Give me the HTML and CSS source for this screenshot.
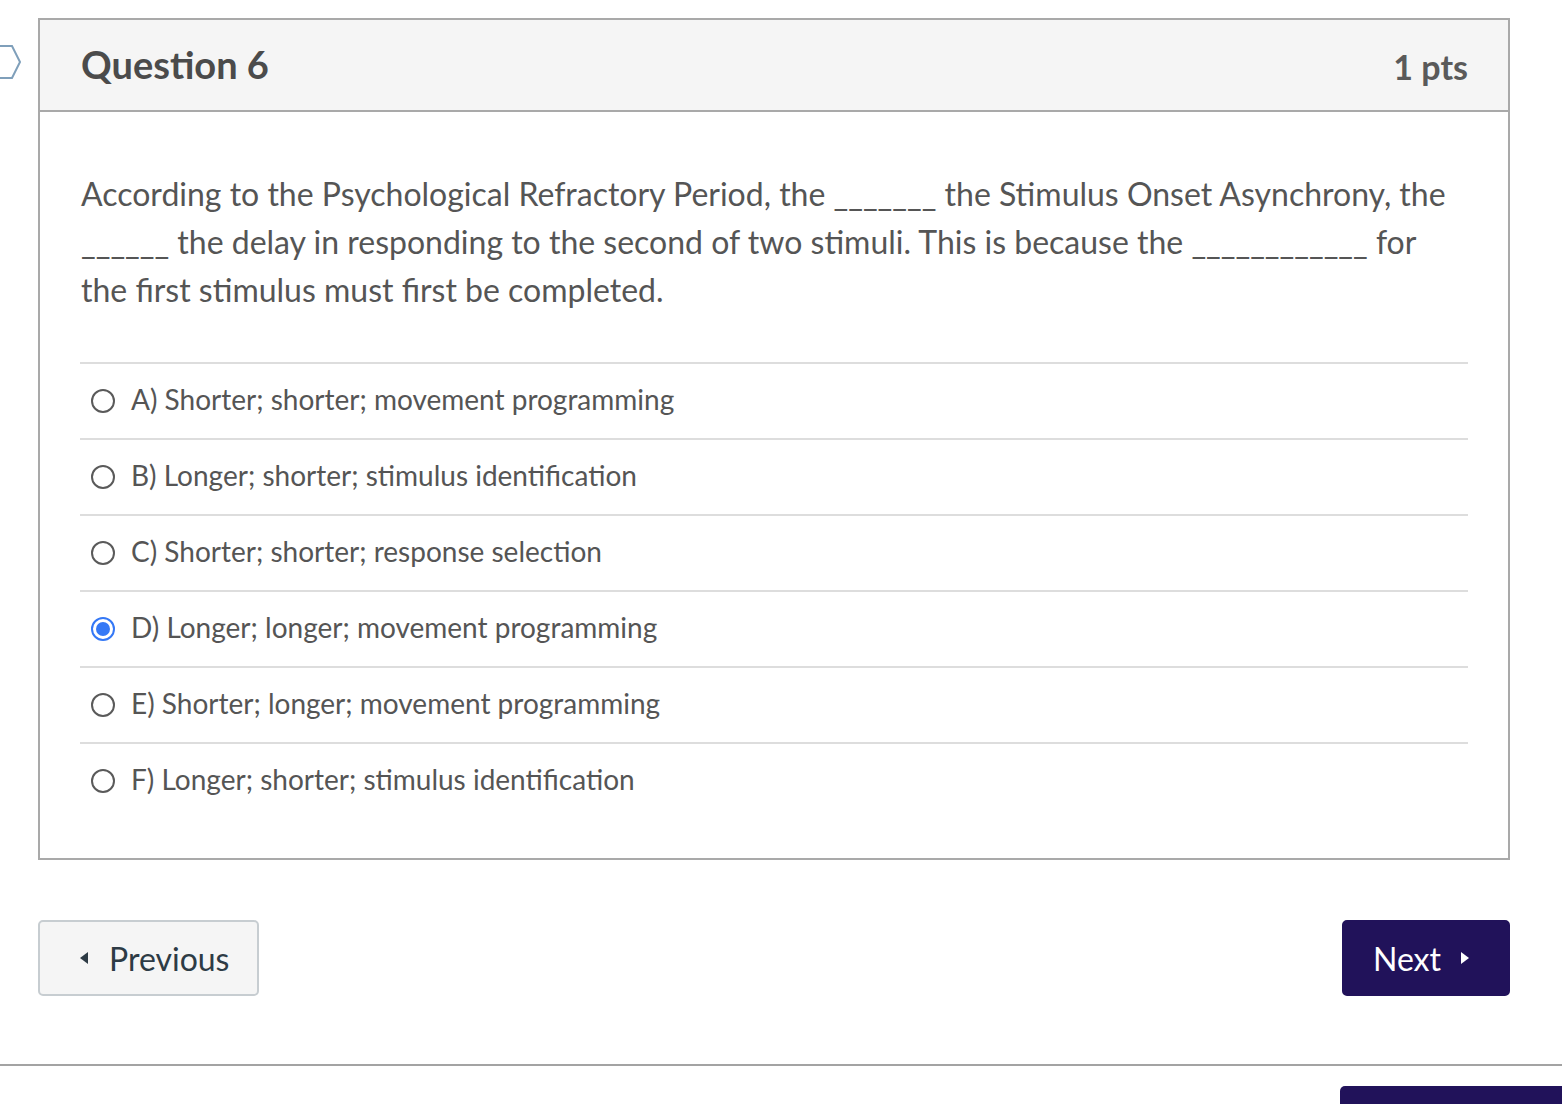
FILE: index.html
```html
<!DOCTYPE html>
<html>
<head>
<meta charset="utf-8">
<link rel="stylesheet" href="styles.css">
</head>
<body>
<svg class="flag" width="22" height="36" viewBox="0 0 22 36"><polygon points="-10,2 12,2 20,18 12,34 -10,34" fill="none" stroke="#7f9fba" stroke-width="2"/></svg>
<div class="wrap">
  <div class="card">
    <div class="card-head">
      <span class="title">Question 6</span>
      <span class="pts">1 pts</span>
    </div>
    <div class="card-body">
      <p class="qtext">According to the Psychological Refractory Period, the _______ the Stimulus Onset Asynchrony, the ______ the delay in responding to the second of two stimuli. This is because the ____________ for the first stimulus must first be completed.</p>
      <div class="answers">
        <div class="answer"><span class="radio"></span><span>A) Shorter; shorter; movement programming</span></div>
        <div class="answer"><span class="radio"></span><span>B) Longer; shorter; stimulus identification</span></div>
        <div class="answer"><span class="radio"></span><span>C) Shorter; shorter; response selection</span></div>
        <div class="answer"><span class="radio checked"></span><span>D) Longer; longer; movement programming</span></div>
        <div class="answer"><span class="radio"></span><span>E) Shorter; longer; movement programming</span></div>
        <div class="answer"><span class="radio"></span><span>F) Longer; shorter; stimulus identification</span></div>
      </div>
    </div>
  </div>
  <div class="nav">
    <button class="btn prev"><span class="tri-left"></span>Previous</button>
    <button class="btn next">Next<span class="tri-right"></span></button>
  </div>
</div>
<div class="rule"></div>
<div class="bottom-row"><div class="submit"></div></div>
</body>
</html>
```
FILE: styles.css
```css
html, body {
  margin: 0;
  padding: 0;
  background: #ffffff;
  overflow: hidden;
}
body {
  font-family: Lato, "Noto Sans", sans-serif;
  color: #555555;
  position: relative;
  height: 1104px;
}
.flag {
  position: absolute;
  left: 0;
  top: 44px;
}
.wrap {
  margin: 18px 52px 0 38px;
}
.card {
  border: 2px solid #a9a9a9;
}
.card-head {
  height: 90px;
  background: #f5f5f5;
  border-bottom: 2px solid #a9a9a9;
  display: flex;
  align-items: center;
  justify-content: space-between;
  padding: 0 40px 0 41px;
}
.title {
  font-size: 38px;
  font-weight: 700;
  color: #4b4b4b;
  margin-top: -2px;
}
.pts {
  font-size: 34px;
  font-weight: 700;
  color: #5a5a5a;
  margin-top: 2px;
}
.card-body {
  padding: 58px 40px 40px 40px;
}
.qtext {
  margin: 0 0 48px 1px;
  font-size: 32px;
  line-height: 48px;
  color: #555555;
}
.answer {
  display: flex;
  align-items: center;
  height: 74px;
  border-top: 2px solid #dddddd;
  font-size: 28px;
  color: #555555;
}
.answer > span:last-child {
  margin-top: -4px;
}
.radio {
  width: 20px;
  height: 20px;
  border: 2px solid #5a5a5a;
  border-radius: 50%;
  margin: 0 16px 0 11px;
  box-sizing: content-box;
  position: relative;
  flex: none;
}
.radio.checked {
  border-color: #3478f6;
}
.radio.checked::after {
  content: "";
  position: absolute;
  left: 3px;
  top: 3px;
  width: 14px;
  height: 14px;
  border-radius: 50%;
  background: #3478f6;
}
.nav {
  display: flex;
  justify-content: space-between;
  margin-top: 60px;
}
.btn {
  font-family: Lato, "Noto Sans", sans-serif;
  font-size: 32px;
  height: 76px;
  border-radius: 5px;
  display: flex;
  align-items: center;
  cursor: pointer;
}
.prev {
  width: 221px;
  background: #f5f5f5;
  border: 2px solid #c7cdd1;
  color: #2d3b45;
  padding: 0 0 0 40px;
}
.tri-left {
  width: 0;
  height: 0;
  border-top: 6px solid transparent;
  border-bottom: 6px solid transparent;
  border-right: 8px solid #2d3b45;
  margin-right: 21px;
}
.next {
  width: 168px;
  background: #21125a;
  border: 2px solid #21125a;
  color: #ffffff;
  padding: 0 0 0 29px;
}
.tri-right {
  width: 0;
  height: 0;
  border-top: 6px solid transparent;
  border-bottom: 6px solid transparent;
  border-left: 8px solid #ffffff;
  margin-left: 20px;
}
.rule {
  margin-top: 68px;
  height: 2px;
  background: #a3a3a3;
}
.bottom-row {
  display: flex;
  justify-content: flex-end;
  margin-top: 20px;
}
.submit {
  width: 222px;
  height: 18px;
  background: #21125a;
  border-radius: 5px 0 0 0;
}
```
